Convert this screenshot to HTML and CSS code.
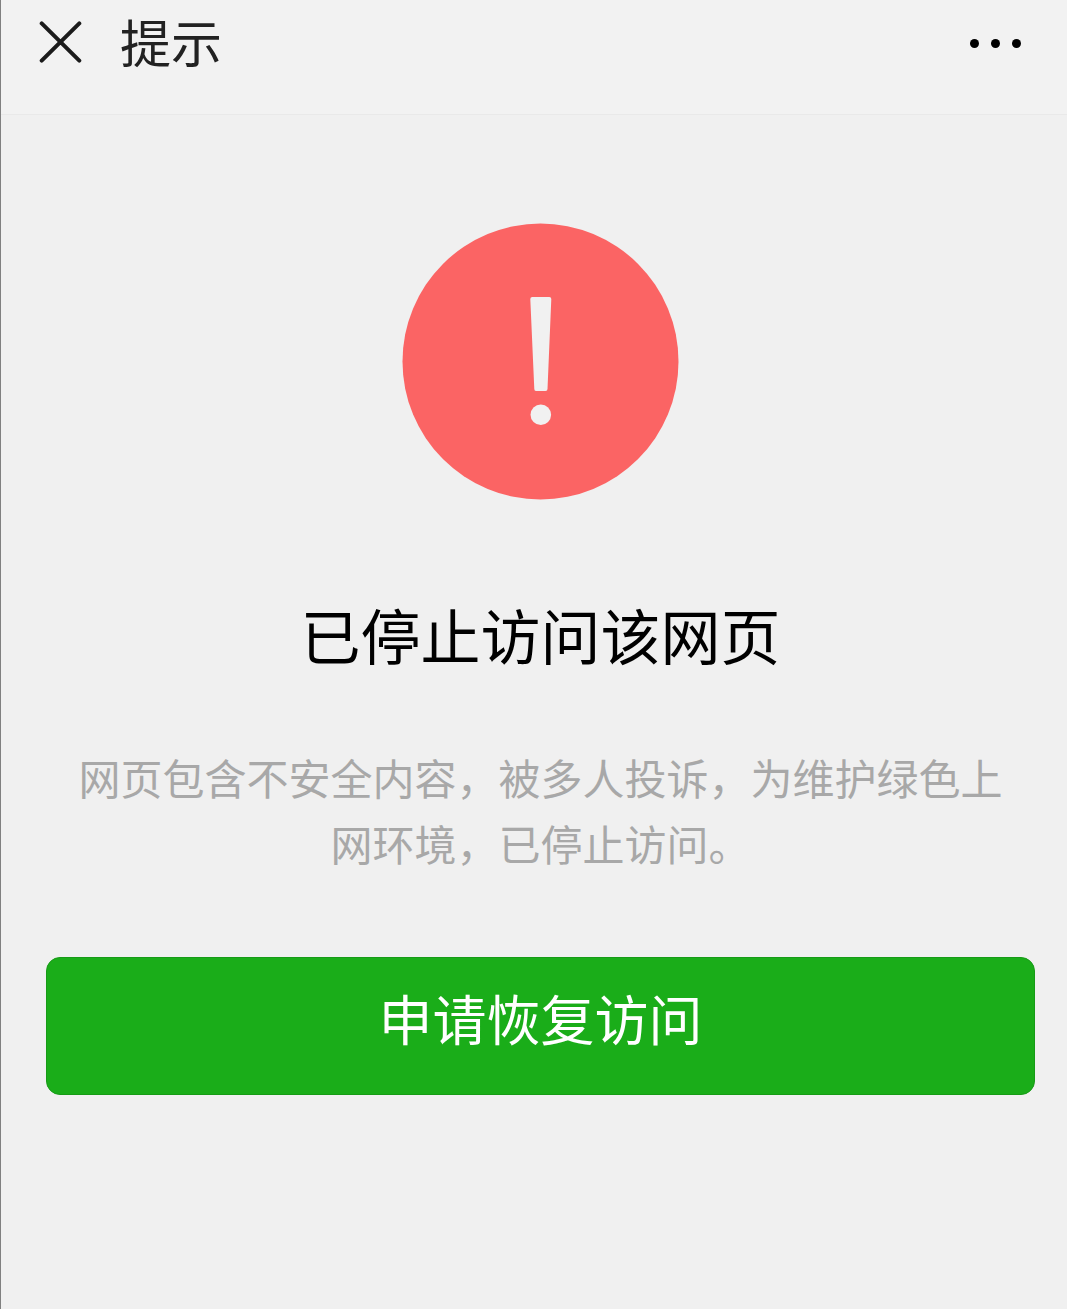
FILE: index.html
```html
<!DOCTYPE html>
<html lang="zh-CN">
<head>
    <meta charset="UTF-8">
    <meta name="viewport" content="width=device-width, initial-scale=1.0">
    <title>提示</title>
    <link rel="stylesheet" href="styles.css">
</head>
<body>
<div class="topbar">
    <svg class="close" width="44" height="44" viewBox="0 0 44 44">
        <path d="M2.700 2.400L40.300 39.600M40.300 2.400L2.700 39.600" stroke="#1b1b1b" stroke-width="4" stroke-linecap="round" fill="none"/>
    </svg>
    <span class="title">提示</span>
    <div class="more"><i></i><i></i><i></i></div>
</div>
<div class="main">
    <svg class="warn" width="278" height="278" viewBox="0 0 278 278">
        <circle cx="138.500" cy="138.500" r="138" fill="#fb6464"/>
        <path d="M128.300 76Q128.300 74 130.300 74H147.300Q149.300 74 149.300 76L145.500 166Q145.500 168 143.500 168H134Q132.300 168 132.300 166Z" fill="#f1f1f1"/>
        <circle cx="138.800" cy="191.700" r="10.300" fill="#f1f1f1"/>
    </svg>
    <h1>已停止访问该网页</h1>
    <p class="desc">网页包含不安全内容，被多人投诉，为维护绿色上网环境，已停止访问。</p>
    <button class="btn">申请恢复访问</button>
</div>
</body>
</html>
```

FILE: styles.css
```css
html, body {margin: 0; padding: 0;}
body {width: 1067px; height: 1309px; overflow: hidden; box-sizing: border-box; background-color: #f0f0f0; border-left: 1px solid #808080; font-family: "Noto Sans CJK SC", "Noto Sans", sans-serif;}
.topbar {display: flex; align-items: center; box-sizing: border-box; height: 115px; padding: 0 46px 28px 38px; background-color: #f2f2f2; border-bottom: 1px solid #e9e9e9;}
.close {flex: none;}
.title {margin: 0 0 5px 37px; font-size: 51px; line-height: 60px; color: #222; font-weight: 400;}
.more {display: flex; gap: 12px; margin-left: auto;}
.more i {display: block; width: 9px; height: 9px; border-radius: 50%; background-color: #000;}
.main {display: flex; flex-direction: column; align-items: center; padding: 108px 32px 0 45px;}
.warn {display: block;}
h1 {margin: 93px 0 0; font-size: 60px; line-height: 80px; font-weight: 400; color: #000;}
.desc {margin: 70px 0 0; width: 950px; text-align: center; font-size: 42px; line-height: 66px; color: #a8a8a8;}
.btn {display: block; width: 100%; height: 138px; margin-top: 81px; padding: 0 0 18px; background-color: #1aad19; border: 1px solid #179b16; border-radius: 14px; color: #fff; font-family: inherit; font-size: 54px;}
```
